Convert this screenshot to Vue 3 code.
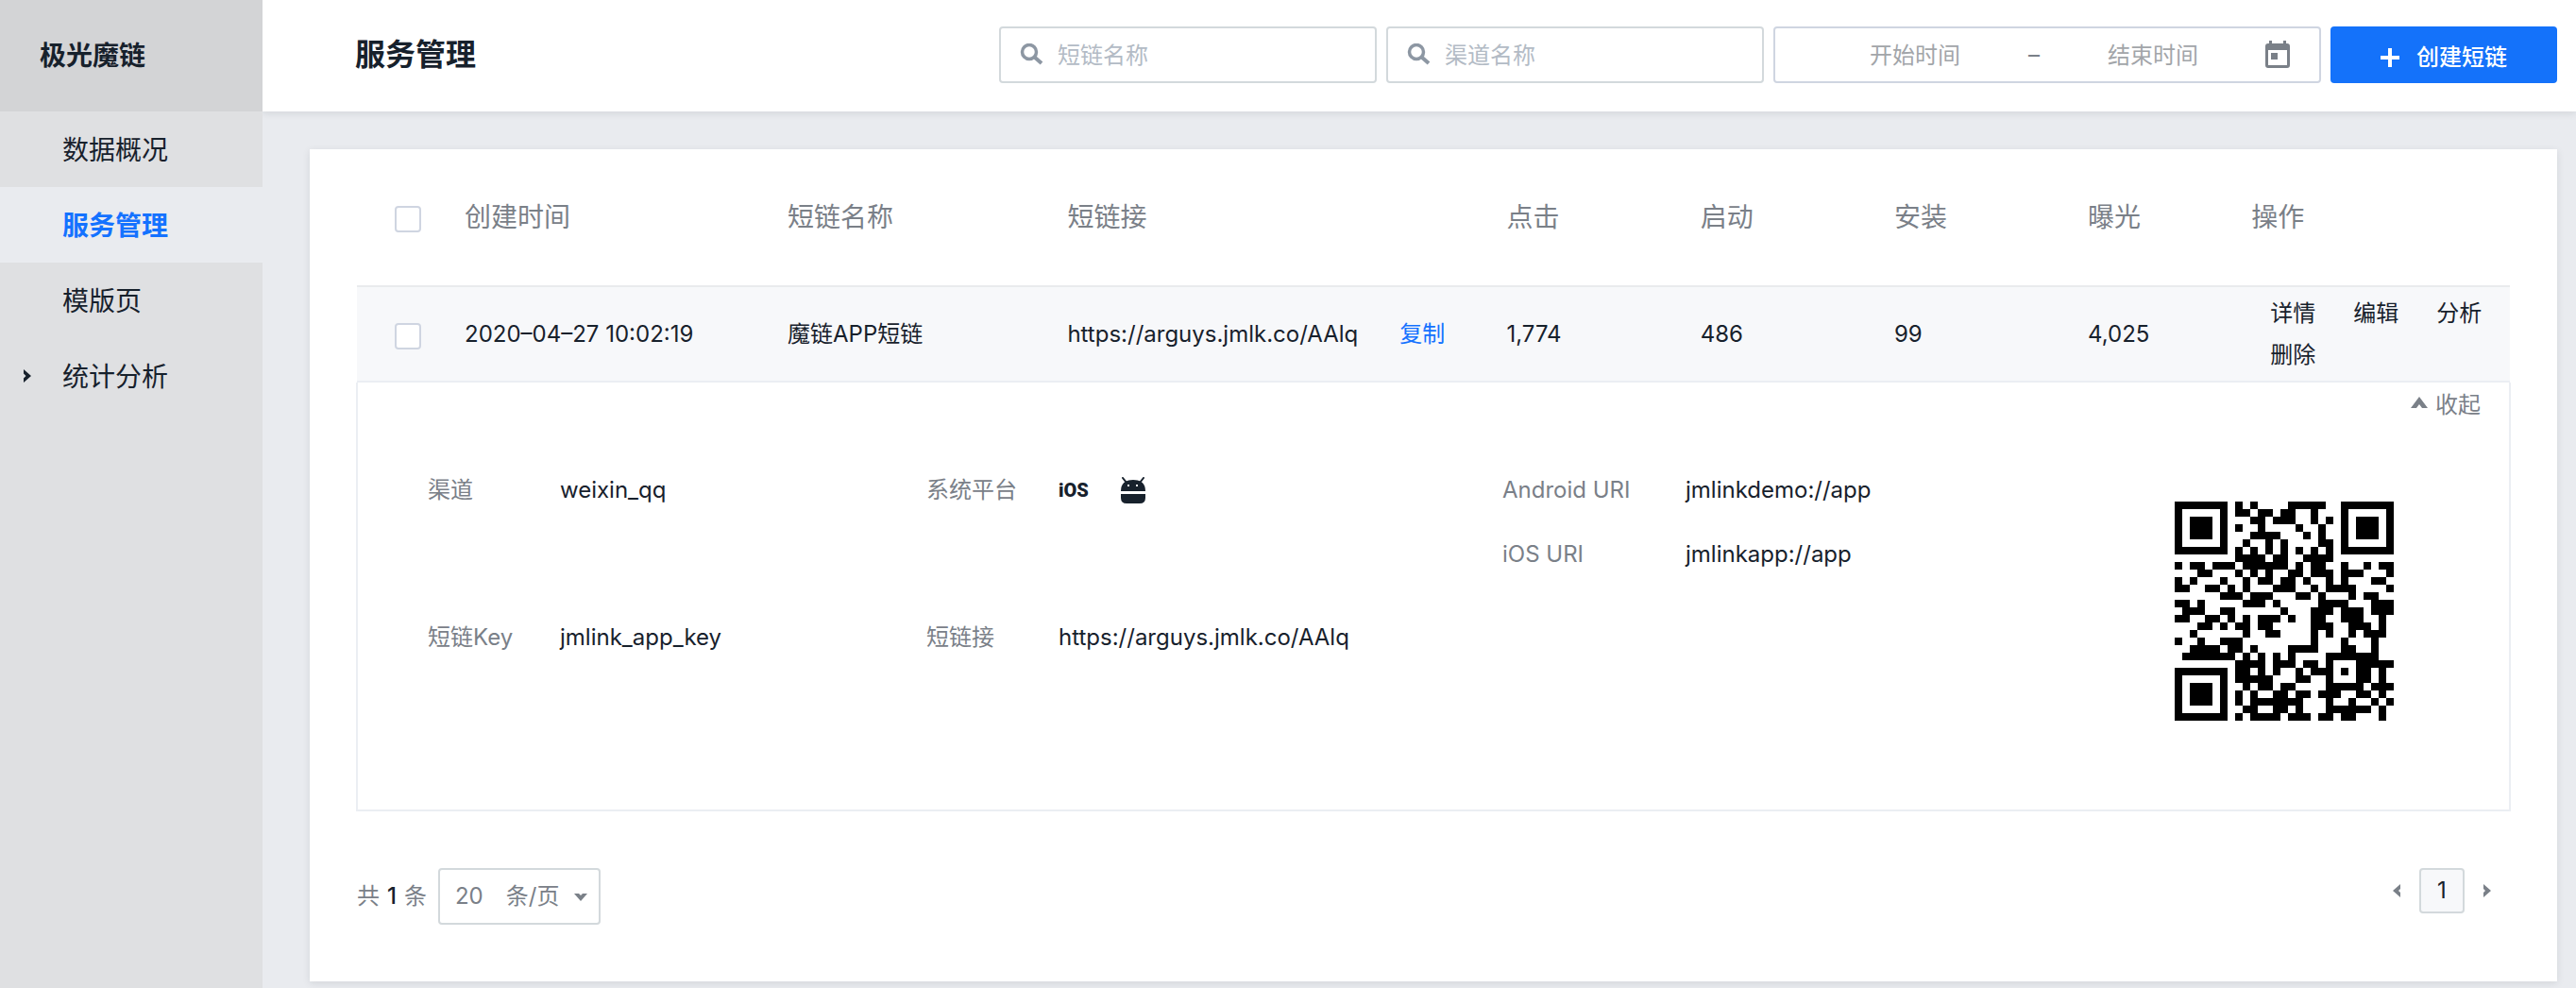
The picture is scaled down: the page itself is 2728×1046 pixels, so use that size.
<script setup>
import { ref } from 'vue'

const menu = [
  { label: '数据概况' },
  { label: '服务管理', active: true },
  { label: '模版页' },
  { label: '统计分析', expandable: true },
]

const columns = ['创建时间', '短链名称', '短链接', '点击', '启动', '安装', '曝光', '操作']

const rows = [
  {
    created: '2020–04–27 10:02:19',
    name: '魔链APP短链',
    url: 'https://arguys.jmlk.co/AAlq',
    click: '1,774',
    launch: '486',
    install: '99',
    exposure: '4,025',
  },
]
const actions = ['详情', '编辑', '分析', '删除']

const nameQuery = ref('')
const channelQuery = ref('')
const start = ref('')
const end = ref('')

// Dark modules of each QR row, as column numbers and ranges
const qrRows = [
  '0-6 8 10 15-19 22-28',
  '0 6 8-9 11-12 14-15 18 22 28',
  '0 2-4 6 10-11 13-15 18 20 22 24-26 28',
  '0 2-4 6 8 11 16 19 22 24-26 28',
  '0 2-4 6 10-13 17 19 22 24-26 28',
  '0 6 9 12 14 19-20 22 28',
  '0-6 8 10 12 14 16 18 20 22-28',
  '8-11 13-14 17-20',
  '0 2-3 5-7 9-14 16 18-19 22 25 27-28',
  '3-4 8 10 12 15-16 18-20 22-24 28',
  '0 2 6 9 11-12 14-15 17 20 22 26-27',
  '0-1 4-5 7 9 13-15 18 20-23 28',
  '6-8 10-12 16-17 19 23 25-26',
  '0-1 3 9-11 13 19-22 26-28',
  '1-3 6-7 14 18-20 22-24 26-28',
  '0-1 4-5 7 9 11-13 15 18-19 22-24 27',
  '3-4 6 8-9 11-12 18-20 23-25 27',
  '2 9 12-13 18 20 23 25-27',
  '0 3 6-8 18 22 26',
  '2-5 7-8 10 15-18 22-23 26',
  '1-7 9 11 13 15 20-26',
  '8-11 13-15 17-18 20 24-28',
  '0-6 8-9 11 13 16 18-20 22 24-25 27',
  '0 6 8-12 16-17 20 24-25 27',
  '0 2-4 6 9 11-12 14-15 20-24 26-28',
  '0 2-4 6 8 10 13-14 16-17 19-21 24-25 27',
  '0 2-4 6 8 10-16 20 23 26 28',
  '0 6 9-10 13-14 16 20-25 27',
  '0-6 8 10-13 15-17 19-20 22-23 27',
]
const qrPath = qrRows
  .map((row, y) =>
    row
      .split(' ')
      .map((run) => {
        const [a, b = a] = run.split('-').map(Number)
        return `M${a} ${y}h${b - a + 1}v1h-${b - a + 1}z`
      })
      .join('')
  )
  .join('')
</script>

<template>
  <div class="app">
    <aside class="sidebar">
      <div class="brand">极光魔链</div>
      <nav>
        <a v-for="item in menu" :key="item.label" href="#" class="menu-item" :class="{ active: item.active }">
          <svg v-if="item.expandable" class="expand" width="8" height="14" viewBox="0 0 8 14" aria-hidden="true">
            <path d="M0 0L8 7L0 14V9.500L2.500 7L0 4.500Z" fill="currentColor" />
          </svg>
          {{ item.label }}
        </a>
      </nav>
    </aside>

    <div class="page">
      <header class="topbar">
        <h1>服务管理</h1>
        <div class="filters">
          <label class="field search">
            <svg width="26" height="24" viewBox="0 0 26 24" aria-hidden="true">
              <circle cx="10" cy="9" r="7.500" fill="none" stroke="currentColor" stroke-width="3.500" />
              <path d="M15 14L23 21" stroke="currentColor" stroke-width="4" />
            </svg>
            <input v-model="nameQuery" type="text" placeholder="短链名称" aria-label="短链名称" />
          </label>
          <label class="field search">
            <svg width="26" height="24" viewBox="0 0 26 24" aria-hidden="true">
              <circle cx="10" cy="9" r="7.500" fill="none" stroke="currentColor" stroke-width="3.500" />
              <path d="M15 14L23 21" stroke="currentColor" stroke-width="4" />
            </svg>
            <input v-model="channelQuery" type="text" placeholder="渠道名称" aria-label="渠道名称" />
          </label>
          <div class="field range">
            <input v-model="start" type="text" placeholder="开始时间" aria-label="开始时间" />
            <span class="dash">–</span>
            <input v-model="end" type="text" placeholder="结束时间" aria-label="结束时间" />
            <svg class="calendar" width="26" height="30" viewBox="0 0 26 30" aria-hidden="true">
              <path
                fill="currentColor"
                fill-rule="evenodd"
                d="M4 0H7V3H19V0H22V3H23Q26 3 26 6V26Q26 29 23 29H3Q0 29 0 26V6Q0 3 3 3H4ZM3 10V26H23V10ZM6 13H13V20H6Z"
              />
            </svg>
          </div>
          <button type="button" class="create">
            <svg width="20" height="20" viewBox="0 0 20 20" aria-hidden="true">
              <path d="M10 0V20M0 10H20" stroke="currentColor" stroke-width="4" />
            </svg>
            创建短链
          </button>
        </div>
      </header>

      <main class="card">
        <table>
          <colgroup>
            <col class="c-check" />
            <col class="c-time" />
            <col class="c-name" />
            <col class="c-url" />
            <col class="c-num" />
            <col class="c-num" />
            <col class="c-num" />
            <col class="c-exposure" />
            <col />
          </colgroup>
          <thead>
            <tr>
              <th class="check"><input type="checkbox" aria-label="全选" /></th>
              <th v-for="c in columns" :key="c">{{ c }}</th>
            </tr>
          </thead>
          <tbody>
            <tr v-for="row in rows" :key="row.url">
              <td class="check"><input type="checkbox" aria-label="选择" /></td>
              <td>{{ row.created }}</td>
              <td>{{ row.name }}</td>
              <td>
                <div class="url">
                  <span>{{ row.url }}</span>
                  <button type="button" class="copy">复制</button>
                </div>
              </td>
              <td>{{ row.click }}</td>
              <td>{{ row.launch }}</td>
              <td>{{ row.install }}</td>
              <td>{{ row.exposure }}</td>
              <td>
                <div class="actions">
                  <a v-for="a in actions" :key="a" href="#">{{ a }}</a>
                </div>
              </td>
            </tr>
          </tbody>
        </table>

        <section class="detail">
          <button type="button" class="collapse">
            <svg width="18" height="12" viewBox="0 0 18 12" aria-hidden="true">
              <path d="M0 12L9 0L18 12H12L9 8L6 12Z" fill="currentColor" />
            </svg>
            收起
          </button>
          <div class="detail-body">
            <dl class="group first">
              <dt>渠道</dt>
              <dd>weixin_qq</dd>
              <dt>短链Key</dt>
              <dd>jmlink_app_key</dd>
            </dl>
            <dl class="group second">
              <dt>系统平台</dt>
              <dd class="platforms">
                <span class="ios">iOS</span>
                <svg width="26" height="28" viewBox="0 0 26 28" role="img" aria-label="Android">
                  <g fill="currentColor">
                    <path d="M0 15Q0 3 13 3T26 15Z" />
                    <path d="M0 18H26V22Q26 28 20 28H6Q0 28 0 22Z" />
                  </g>
                  <path d="M2 1L6 6M24 1L20 6" stroke="currentColor" stroke-width="2" stroke-linecap="round" />
                  <path d="M7 8H9V10H7ZM16 8H18V10H16Z" fill="#fff" />
                </svg>
              </dd>
              <dt>短链接</dt>
              <dd>https://arguys.jmlk.co/AAlq</dd>
            </dl>
            <dl class="group third">
              <dt>Android URI</dt>
              <dd>jmlinkdemo://app</dd>
              <dt>iOS URI</dt>
              <dd>jmlinkapp://app</dd>
            </dl>
            <svg class="qr" viewBox="0 0 29 29" shape-rendering="crispEdges" role="img" aria-label="二维码">
              <path :d="qrPath" />
            </svg>
          </div>
        </section>

        <footer class="pagination">
          <div class="total">
            共 <b>1</b> 条
            <span class="size">
              <select aria-label="每页条数">
                <option>20&#x3000;条/页</option>
              </select>
              <svg width="14" height="8" viewBox="0 0 14 8" aria-hidden="true">
                <path d="M0 0H5L7 2L9 0H14L7 8Z" fill="currentColor" />
              </svg>
            </span>
          </div>
          <div class="pager">
            <button type="button" aria-label="上一页">
              <svg width="8" height="14" viewBox="0 0 8 14" aria-hidden="true">
                <path d="M8 0L0 7L8 14V9L6 7L8 5Z" fill="currentColor" />
              </svg>
            </button>
            <button type="button" class="current">1</button>
            <button type="button" aria-label="下一页">
              <svg width="8" height="14" viewBox="0 0 8 14" aria-hidden="true">
                <path d="M0 0L8 7L0 14V9L2 7L0 5Z" fill="currentColor" />
              </svg>
            </button>
          </div>
        </footer>
      </main>
    </div>
  </div>
</template>

<style>
body {
  background: #e9ebef;
}
</style>

<style scoped>
.app {
  display: flex;
  min-height: 100vh;
  color: #17212c;
  font: 24px/44px Inter, 'Noto Sans CJK SC', sans-serif;
}
.app * {
  box-sizing: border-box;
}
a {
  color: inherit;
  text-decoration: none;
}
button,
input,
select {
  margin: 0;
  padding: 0;
  border: 0;
  background: none;
  color: inherit;
  font: inherit;
}
svg {
  display: block;
  flex: none;
}

.sidebar {
  position: relative;
  z-index: 1;
  flex: none;
  width: 278px;
  background: #dfe0e2;
  font-size: 28px;
}
.brand {
  height: 118px;
  padding-left: 42px;
  background: #d3d4d6;
  font-weight: 700;
  line-height: 118px;
}
.menu-item {
  position: relative;
  display: block;
  height: 80px;
  padding-left: 66px;
  line-height: 82px;
}
.menu-item.active {
  background: #e9ebef;
  color: #1472ff;
  font-weight: 700;
}
.expand {
  position: absolute;
  left: 25px;
  top: 33px;
}

.page {
  flex: 1;
  min-width: 0;
}
.topbar {
  display: flex;
  align-items: center;
  justify-content: space-between;
  height: 118px;
  padding: 0 20px 2px 98px;
  background: #fff;
  box-shadow: 0 2px 8px rgba(23, 33, 44, 0.1);
}
h1 {
  margin: 0;
  font-size: 32px;
  font-weight: 700;
  line-height: 48px;
}
.filters {
  display: flex;
  gap: 10px;
}
.field {
  display: flex;
  align-items: center;
  height: 60px;
  border: 2px solid #d3d9dc;
  border-radius: 4px;
}
.field input {
  min-width: 0;
  height: 56px;
  outline: none;
}
.search {
  width: 400px;
  padding: 0 20px;
  gap: 14px;
  color: #8d97a3;
}
.search input {
  flex: 1;
}
.search input::placeholder {
  color: #b3bbc5;
}
.range {
  width: 580px;
  padding: 0 31px 0 48px;
  border-color: #cfd5e1;
  color: #7a8088;
}
.range input {
  width: 200px;
  text-align: center;
}
.range input::placeholder {
  color: #a2a5a9;
}
.dash {
  width: 52px;
  text-align: center;
}
.calendar {
  margin-left: auto;
}
.create {
  display: flex;
  align-items: center;
  justify-content: center;
  gap: 18px;
  width: 240px;
  height: 60px;
  padding-top: 6px;
  border-radius: 4px;
  background: #1472fa;
  color: #fff;
  font-weight: 500;
}

.card {
  margin: 40px 20px 7px 50px;
  padding: 0 50px 60px;
  background: #fff;
  box-shadow: 0 2px 8px rgba(23, 33, 44, 0.1);
}
table {
  width: 100%;
  border-collapse: separate;
  border-spacing: 0;
  table-layout: fixed;
}
.c-check {
  width: 5%;
}
.c-time {
  width: 15%;
}
.c-name {
  width: 13%;
}
.c-url {
  width: 20.4%;
}
.c-num {
  width: 9%;
}
.c-exposure {
  width: 7.6%;
}
th,
td {
  padding: 0;
  text-align: left;
  vertical-align: middle;
}
th {
  height: 146px;
  border-bottom: 2px solid #e9ebed;
  color: #7a8088;
  font-size: 28px;
  font-weight: 400;
}
td {
  height: 101px;
  border-bottom: 2px solid #ebeef3;
  background: #f7f8fa;
  white-space: nowrap;
}
.check {
  padding: 4px 0 0 40px;
}
.check input {
  display: block;
  width: 28px;
  height: 28px;
  border: 2px solid #cfd5e1;
  border-radius: 4px;
  background: #fff;
  appearance: none;
}
.url {
  display: flex;
  gap: 44px;
}
.copy {
  color: #1472ff;
}
.actions {
  display: flex;
  flex-wrap: wrap;
  column-gap: 40px;
  padding-left: 20px;
}

.detail {
  height: 454px;
  margin: 0 -1px;
  border: 2px solid #ebeef3;
  border-top: 0;
}
.collapse {
  display: flex;
  align-items: center;
  gap: 8px;
  margin: 0 30px 0 auto;
  height: 48px;
  color: #7a8088;
}
.collapse svg {
  margin-bottom: 6px;
}
.detail-body {
  display: flex;
  padding: 44px 122px 0 74px;
}
.group {
  display: grid;
  align-content: start;
  margin: 0;
}
dt {
  color: #7a8088;
}
dd {
  margin: 0;
}
.first,
.second {
  grid-template-columns: 140px 1fr;
  row-gap: 112px;
}
.first {
  width: 528px;
}
.second {
  width: 610px;
}
.third {
  grid-template-columns: 194px 1fr;
  row-gap: 24px;
}
.platforms {
  display: flex;
  align-items: center;
  gap: 32px;
}
.ios {
  width: 34px;
  font-family: Roboto, 'Liberation Sans', sans-serif;
  font-size: 20px;
  font-weight: 900;
}
.qr {
  width: 232px;
  height: 232px;
  margin: 34px 0 0 auto;
}

.pagination {
  display: flex;
  align-items: flex-start;
  justify-content: space-between;
  padding-top: 60px;
}
.total {
  display: flex;
  align-items: center;
  gap: 8px;
  color: #7a8088;
}
.total b {
  color: #17212c;
  font-weight: 500;
}
.size {
  position: relative;
  margin-left: 4px;
}
.size select {
  display: block;
  width: 172px;
  height: 60px;
  padding-left: 16px;
  border: 2px solid #d3d9dc;
  border-radius: 4px;
  appearance: none;
}
.size svg {
  position: absolute;
  right: 14px;
  top: 27px;
  pointer-events: none;
}
.pager {
  display: flex;
  color: #7a8088;
}
.pager button {
  display: flex;
  align-items: center;
  justify-content: center;
  width: 48px;
  height: 48px;
}
.pager .current {
  border: 2px solid #d3d9dc;
  border-radius: 4px;
  background: #f7f8fa;
  color: #17212c;
}
</style>
